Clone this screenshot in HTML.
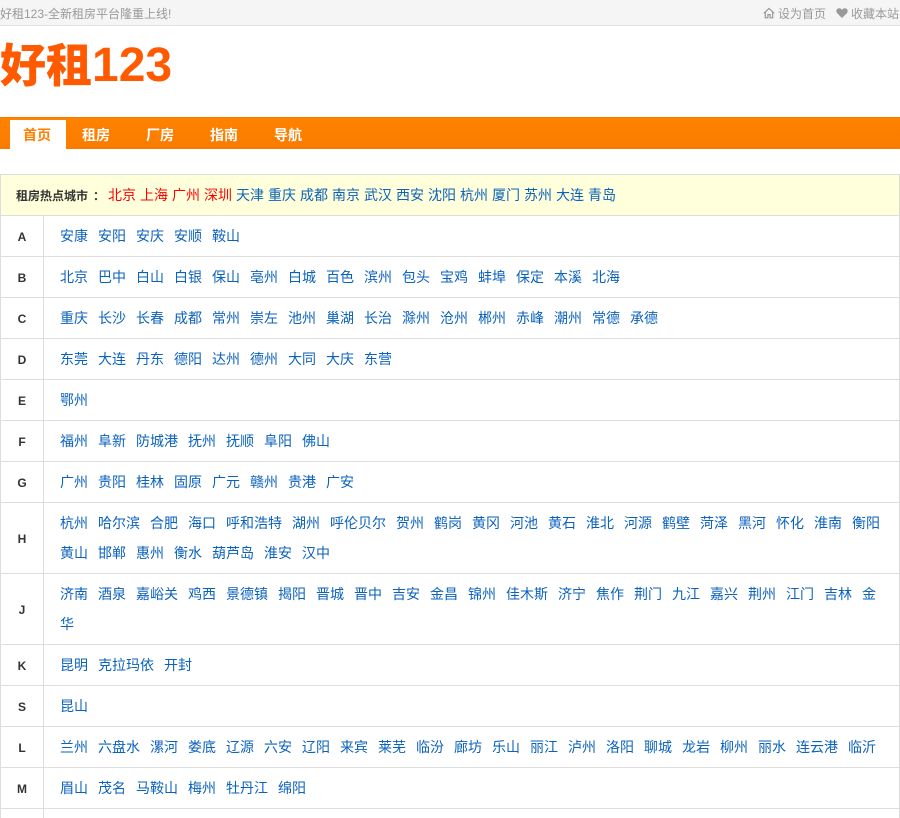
<!DOCTYPE html>
<html lang="zh"><head><meta charset="utf-8"><title>好租123</title>
<style>
*{box-sizing:border-box}
html,body{margin:0;padding:0;width:900px;height:818px;overflow:hidden;background:#fff}
body{font:14px/30px "WenQuanYi Zen Hei","Liberation Sans","Noto Sans CJK SC",sans-serif;color:#333;position:relative}
a{color:#0b62bd;text-decoration:none}
#top{position:absolute;left:0;top:0;width:900px;height:26px;background:#f5f5f5;border-bottom:1px solid #e3e3e3;color:#999;font-size:12px;font-family:"WenQuanYi Zen Hei","Liberation Sans",sans-serif}
#top span{position:absolute;top:0;white-space:nowrap;line-height:28px}
#top svg{position:absolute;top:7px}
#logo{position:absolute;left:0;top:32px;font:900 48px/66px "Liberation Sans","Noto Sans CJK SC",sans-serif;color:#ff5a00;white-space:nowrap}
#logo i{font-style:normal;font-size:46px;position:relative;top:1px}
#nav{position:absolute;left:0;top:117px;width:900px;height:32px;background:linear-gradient(#ff8200,#f97c00);border-top:1px solid #f57800}
#nav b{position:absolute;top:2px;line-height:31px;color:#fff;font-size:14px;font-weight:bold;white-space:nowrap;font-family:"WenQuanYi Zen Hei","Noto Sans CJK SC",sans-serif}
#tab{position:absolute;left:10px;top:2px;width:56px;height:29px;background:#fff}
#box{position:absolute;left:0;top:174px;width:900px;border:1px solid #ddd;border-bottom:0}
#hot{height:41px;background:#ffffdc;border-bottom:1px solid #ddd;padding-left:15px;line-height:40px;white-space:nowrap}
#hot b{font-size:12px;color:#333;display:inline-block;width:92px}
#hot b span{position:relative;left:5px}
#hot a{margin-right:4px}
#hot a.red{color:#f00}
.row{position:relative;border-bottom:1px solid #ddd;padding:5px 5px 5px 59px;line-height:30px;min-height:41px}
.row:before{content:"";position:absolute;left:42px;top:0;bottom:0;width:1px;background:#ddd}
.row>b{position:absolute;left:0;top:2px;bottom:0;width:42px;display:flex;align-items:center;justify-content:center;font:bold 12px "Liberation Sans",sans-serif;color:#333}
.row a{margin-right:10px}
</style></head><body>
<div id="top">
<span style="left:0">好租123-全新租房平台隆重上线!</span>
<svg style="left:763px" width="12" height="12" viewBox="0 0 12 12" fill="none" stroke="#999" stroke-width="1.2"><path d="M.8 6.3 6 1.4l5.2 4.9M2.3 5.2v5.6h2.600V7.600h2.200v3.200h2.600V5.200"/></svg>
<span style="left:778px">设为首页</span>
<svg style="left:836px" width="12" height="12" viewBox="0 0 12 12" fill="#999"><path d="M6 11 1.200 6.200C-.6 4.200.6 1.300 3.200 1.300 4.400 1.300 5.400 2 6 3c.6-1 1.600-1.700 2.800-1.700 2.600 0 3.800 2.900 2 4.900z"/></svg>
<span style="left:851px">收藏本站</span>
</div>
<div id="logo"><i>好租</i>123</div>
<div id="nav"><div id="tab"></div>
<b style="left:23px;color:#ff7f00">首页</b><b style="left:82px">租房</b><b style="left:146px">厂房</b><b style="left:210px">指南</b><b style="left:274px">导航</b></div>
<div id="box">
<div id="hot"><b>租房热点城市<span>：</span></b><a class="red">北京</a><a class="red">上海</a><a class="red">广州</a><a class="red">深圳</a><a>天津</a><a>重庆</a><a>成都</a><a>南京</a><a>武汉</a><a>西安</a><a>沈阳</a><a>杭州</a><a>厦门</a><a>苏州</a><a>大连</a><a>青岛</a></div>
<div class="row"><b>A</b><a>安康</a><a>安阳</a><a>安庆</a><a>安顺</a><a>鞍山</a></div>
<div class="row"><b>B</b><a>北京</a><a>巴中</a><a>白山</a><a>白银</a><a>保山</a><a>亳州</a><a>白城</a><a>百色</a><a>滨州</a><a>包头</a><a>宝鸡</a><a>蚌埠</a><a>保定</a><a>本溪</a><a>北海</a></div>
<div class="row"><b>C</b><a>重庆</a><a>长沙</a><a>长春</a><a>成都</a><a>常州</a><a>崇左</a><a>池州</a><a>巢湖</a><a>长治</a><a>滁州</a><a>沧州</a><a>郴州</a><a>赤峰</a><a>潮州</a><a>常德</a><a>承德</a></div>
<div class="row"><b>D</b><a>东莞</a><a>大连</a><a>丹东</a><a>德阳</a><a>达州</a><a>德州</a><a>大同</a><a>大庆</a><a>东营</a></div>
<div class="row"><b>E</b><a>鄂州</a></div>
<div class="row"><b>F</b><a>福州</a><a>阜新</a><a>防城港</a><a>抚州</a><a>抚顺</a><a>阜阳</a><a>佛山</a></div>
<div class="row"><b>G</b><a>广州</a><a>贵阳</a><a>桂林</a><a>固原</a><a>广元</a><a>赣州</a><a>贵港</a><a>广安</a></div>
<div class="row"><b>H</b><a>杭州</a><a>哈尔滨</a><a>合肥</a><a>海口</a><a>呼和浩特</a><a>湖州</a><a>呼伦贝尔</a><a>贺州</a><a>鹤岗</a><a>黄冈</a><a>河池</a><a>黄石</a><a>淮北</a><a>河源</a><a>鹤壁</a><a>菏泽</a><a>黑河</a><a>怀化</a><a>淮南</a><a>衡阳</a><a>黄山</a><a>邯郸</a><a>惠州</a><a>衡水</a><a>葫芦岛</a><a>淮安</a><a>汉中</a></div>
<div class="row"><b>J</b><a>济南</a><a>酒泉</a><a>嘉峪关</a><a>鸡西</a><a>景德镇</a><a>揭阳</a><a>晋城</a><a>晋中</a><a>吉安</a><a>金昌</a><a>锦州</a><a>佳木斯</a><a>济宁</a><a>焦作</a><a>荆门</a><a>九江</a><a>嘉兴</a><a>荆州</a><a>江门</a><a>吉林</a><a>金华</a></div>
<div class="row"><b>K</b><a>昆明</a><a>克拉玛依</a><a>开封</a></div>
<div class="row"><b>S</b><a>昆山</a></div>
<div class="row"><b>L</b><a>兰州</a><a>六盘水</a><a>漯河</a><a>娄底</a><a>辽源</a><a>六安</a><a>辽阳</a><a>来宾</a><a>莱芜</a><a>临汾</a><a>廊坊</a><a>乐山</a><a>丽江</a><a>泸州</a><a>洛阳</a><a>聊城</a><a>龙岩</a><a>柳州</a><a>丽水</a><a>连云港</a><a>临沂</a></div>
<div class="row"><b>M</b><a>眉山</a><a>茂名</a><a>马鞍山</a><a>梅州</a><a>牡丹江</a><a>绵阳</a></div>
<div class="row"><b>N</b><a>南京</a></div>
</div>
</body></html>
